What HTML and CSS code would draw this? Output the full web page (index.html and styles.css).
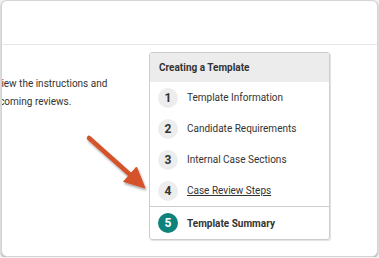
FILE: index.html
```html
<!DOCTYPE html>
<html lang="en">
<head>
  <meta charset="UTF-8">
  <title>Creating a Template</title>
  <link rel="stylesheet" href="styles.css">
</head>
<body>

  <div class="window">
    <div class="topbar"></div>

    <div class="content">
      <p class="intro">review the instructions and<br>upcoming reviews.</p>

      <div class="steps">
        <div class="steps-head">Creating a Template</div>
        <ul class="step-list">
          <li class="step"><span class="num">1</span>Template Information</li>
          <li class="step"><span class="num">2</span>Candidate Requirements</li>
          <li class="step"><span class="num">3</span>Internal Case Sections</li>
          <li class="step"><span class="num">4</span><a href="#" class="step-link">Case Review Steps</a></li>
          <li class="step current"><span class="num">5</span>Template Summary</li>
        </ul>
      </div>
    </div>

    <!-- annotation arrow -->
    <svg class="arrow" width="379" height="258" viewBox="0 0 379 258">
      <defs>
        <filter id="shadow" x="-20%" y="-20%" width="140%" height="140%">
          <feDropShadow dx="1" dy="2" stdDeviation="1.2" flood-color="#000" flood-opacity="0.35"/>
        </filter>
      </defs>
      <g filter="url(#shadow)" fill="#d4532b" stroke="#d4532b">
        <line x1="89" y1="138" x2="131" y2="175.5" stroke-width="4.5" stroke-linecap="round"/>
        <polygon points="145,188 123.5,181.5 136.5,167" stroke-width="1" stroke-linejoin="round"/>
      </g>
    </svg>
  </div>

</body>
</html>
```

FILE: styles.css
```css
:root {
  --text-color: #333;
  --border: #cdcdcd;
  --teal: #0f827b;
}

body {
  margin: 0;
  background: #f2f2f2;
  font-family: Roboto, "Liberation Sans", sans-serif;
  color: var(--text-color);
}

.window {
  position: relative;
  box-sizing: border-box;
  width: 377px;
  height: 257px;
  margin-left: 1px;
  background: #fff;
  border: 1px solid #d4d4d4;
  border-radius: 6px;
  box-shadow: 0 1px 2px rgba(0,0,0,0.35);
  overflow: hidden;
}

.topbar {
  height: 43px;
  border-bottom: 1px solid #e6e6e6;
}

.content {
  display: flex;
}

/* text runs in from the left, clipped by the window edge */
.intro {
  width: 161px;
  flex-shrink: 0;
  margin: 30px 0 0 -14px;
  font-size: 10px;
  line-height: 18px;
  white-space: nowrap;
}

.steps {
  box-sizing: border-box;
  width: 181px;
  margin-top: 7px;
  border: 1px solid var(--border);
  border-radius: 3px;
  box-shadow: 1px 1px 1px rgba(0,0,0,0.12);
  overflow: hidden;
}

.steps-head {
  height: 29px;
  line-height: 29px;
  padding-left: 9px;
  background: #ececec;
  font-size: 10px;
  font-weight: bold;
}

.step-list {
  list-style: none;
  margin: 0;
  padding: 0;
}

.step {
  display: flex;
  align-items: center;
  gap: 9px;
  height: 31px;
  padding-left: 8px;
  font-size: 10px;
}

.num {
  width: 20px;
  height: 20px;
  border-radius: 50%;
  background: #ededed;
  display: flex;
  align-items: center;
  justify-content: center;
  font-size: 12px;
  font-weight: bold;
}

.step-link {
  color: var(--text-color);
  text-decoration: underline;
}

.step.current {
  height: 32px;
  border-top: 1px solid var(--border);
  font-weight: bold;
}

.step.current .num {
  background: var(--teal);
  color: #fff;
}

.arrow {
  position: absolute;
  left: -2px;
  top: -1px;
  pointer-events: none;
}
```
